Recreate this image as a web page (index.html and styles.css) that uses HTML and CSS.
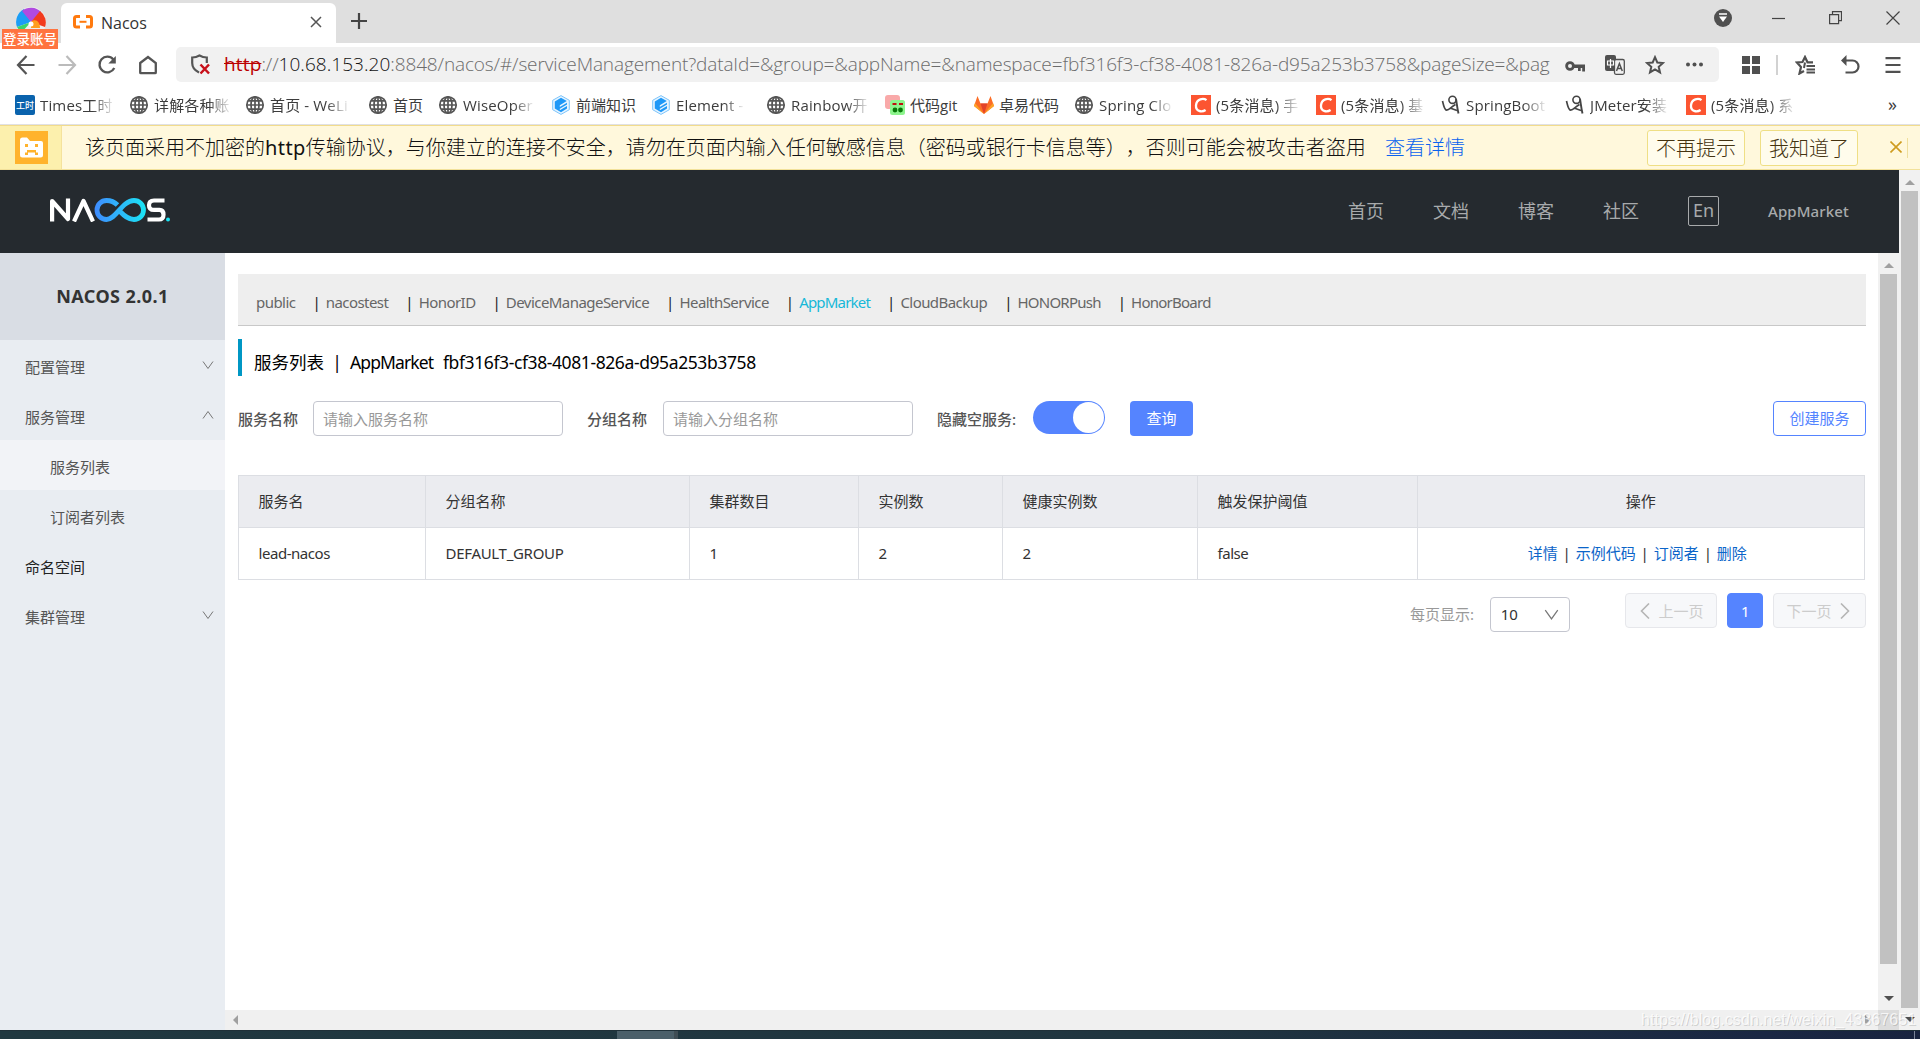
FILE: index.html
```html
<!DOCTYPE html>
<html lang="zh-CN">
<head>
<meta charset="utf-8">
<title>Nacos</title>
<link rel="stylesheet" href="styles.css">
</head>
<body>
<svg class="defs" width="0" height="0" aria-hidden="true">
  <symbol id="globe" viewBox="0 0 20 20"><g fill="none" stroke="#555" stroke-width="1.7"><circle cx="10" cy="10" r="8.2"/><ellipse cx="10" cy="10" rx="4" ry="8.2"/><path d="M10 2v16M2 10h16M3.2 5.8h13.6M3.2 14.2h13.6"/></g></symbol>
  <symbol id="element" viewBox="0 0 20 20"><path d="M10 .6l8.300 4.700v9.400L10 19.400l-8.300-4.700V5.300z" fill="#e6f4ff" stroke="#7cc4fb" stroke-width="1"/><path d="M10 2.800l5.800 3.300-7 4.200v1.600l7.200-4.200v1.900l-7.200 4.200v1.500l7.200-4.200v2.400L10 17.200l-6.200-3.600V6.400z" fill="#1e98f7"/></symbol>
  <symbol id="csdn" viewBox="0 0 20 20"><path d="M0 0h20v20H0z" fill="#fc5531"/><path d="M15.500 5.200C12.500 2.900 5.600 3.700 5 10.300c-.4 6 5.600 7.300 9.600 4.700" fill="none" stroke="#fff" stroke-width="2.300"/></symbol>
  <symbol id="figure" viewBox="0 0 20 20"><g fill="none" stroke="#444"><circle cx="11.500" cy="4.800" r="3.600" stroke-width="1.600"/><path d="M15 4c.8 4 1 8 2.500 14.500" stroke-width="1.900"/><path d="M1.500 6c1 4 1.500 7.500 3.500 9 2.500 1 5-3 9.500-5.500M9 13l7 2.500" stroke-width="1.700"/></g></symbol>
  <symbol id="down" viewBox="0 0 12 12"><path d="M1 2.500l5 7 5-7" fill="none" stroke="currentColor"/></symbol>
</svg>

<header class="browser">
  <div class="tabbar">
    <div class="account">
      <svg class="account-logo" width="30" height="30" viewBox="0 0 30 30"><circle cx="15" cy="15" r="15" fill="#eee"/><path d="M15 15L1 20A14.500 14.500 0 0 1 8 2z" fill="#1b9df5"/><path d="M15 15L6 4A14 14 0 0 1 25 5z" fill="#b04ae0"/><path d="M15 15L24 4A14 14 0 0 1 29 20z" fill="#f23b1e"/><path d="M15 15c4-4 9-1 9 6h-9z" fill="#ff9d1e"/><path d="M15 15L1 20l4 6z" fill="#3bd36c"/><circle cx="15" cy="17" r="2.500" fill="#fff"/></svg>
      <span class="account-tag">登录账号</span>
    </div>
    <div class="tab">
      <svg width="20" height="14" viewBox="0 0 20 14"><path d="M7 1.500H3.500Q1.500 1.500 1.500 3.500v6.500q0 2 2 2H7M13 1.500h3.500q2 0 2 2v6.500q0 2-2 2H13" fill="none" stroke="#ff7a0f" stroke-width="3"/><path d="M6.500 6.800h7" stroke="#ff7a0f" stroke-width="2"/></svg>
      <span class="tab-title">Nacos</span>
      <svg width="12" height="12" viewBox="0 0 12 12"><path d="M1 1l10 10M11 1L1 11" stroke="#555" stroke-width="1.500"/></svg>
    </div>
    <svg class="newtab" width="16" height="16" viewBox="0 0 16 16"><path d="M8 0v16M0 8h16" stroke="#444" stroke-width="2.200"/></svg>
    <div class="window-controls">
      <svg width="18" height="18" viewBox="0 0 18 18"><circle cx="9" cy="9" r="9" fill="#505050"/><path d="M5 5h8" stroke="#fff" stroke-width="1.500"/><path d="M5 7.500h8L9 13z" fill="#fff"/></svg>
      <svg width="13" height="14" viewBox="0 0 13 14"><path d="M0 7.500h13" stroke="#444" stroke-width="1.200"/></svg>
      <svg width="13" height="14" viewBox="0 0 13 14"><path d="M.6 3.600h9v9h-9zM3.500 3.500V.7h9v9H9.700" fill="none" stroke="#444" stroke-width="1.200"/></svg>
      <svg width="14" height="14" viewBox="0 0 14 14"><path d="M.5.500l13 13M13.500.500l-13 13" stroke="#444" stroke-width="1.200"/></svg>
    </div>
  </div>

  <div class="toolbar">
    <div class="nav-icons">
      <svg width="20" height="20" viewBox="0 0 20 20"><path d="M10.500 1L2 10l8.500 9M2 10h16.500" fill="none" stroke="#555" stroke-width="2.200"/></svg>
      <svg width="20" height="20" viewBox="0 0 20 20"><path d="M9.500 1L18 10l-8.500 9M18 10H1.500" fill="none" stroke="#bbb" stroke-width="2.200"/></svg>
      <svg width="20" height="20" viewBox="0 0 20 20"><path d="M16.300 4.500A7.800 7.800 0 1 0 17.300 13" fill="none" stroke="#555" stroke-width="2.300"/><path d="M18.800 1v7.500h-7.500z" fill="#555"/></svg>
      <svg width="20" height="20" viewBox="0 0 20 20"><path d="M2.200 8L10 2l7.800 6v9.500q0 .7-.7.700H2.900q-.7 0-.7-.7z" fill="none" stroke="#555" stroke-width="2.300"/></svg>
    </div>
    <div class="address">
      <svg width="20" height="21" viewBox="0 0 20 21"><path d="M9 18.500C4 16 2.200 13 2.200 9V3.500C5 3.500 7 3 9.500 1.500 12 3 14 3.500 16.800 3.500V9" fill="none" stroke="#555" stroke-width="2.200"/><path d="M10.500 10.500l8.500 9M19 10.500l-8.500 9" stroke="#c8101a" stroke-width="2.500"/></svg>
      <span class="url"><span class="scheme">http</span>://<span class="host">10.68.153.20</span>:8848/nacos/#/serviceManagement?dataId=&amp;group=&amp;appName=&amp;namespace=fbf316f3-cf38-4081-826a-d95a253b3758&amp;pageSize=&amp;pag</span>
      <div class="address-icons">
        <svg width="20" height="20" viewBox="0 0 20 20"><circle cx="5" cy="11" r="3.400" fill="none" stroke="#505050" stroke-width="2.800"/><path d="M8 9.500h12V16.500h-2.800v-3.500h-1.500V16H13v-3H8z" fill="#505050"/></svg>
        <svg width="20" height="20" viewBox="0 0 20 20"><rect x="0" y="0" width="11" height="16" rx="2" fill="#505050"/><rect x="9.500" y="4.500" width="9.800" height="14.800" rx="1.500" fill="#f1f1f1" stroke="#505050" stroke-width="1.300"/><path d="M2.500 6h6v4h-6zM5.500 4v9" fill="none" stroke="#fff" stroke-width="1.200"/><path d="M11.500 16l2.900-7.500 2.900 7.500M12.500 13.500h4" fill="none" stroke="#505050" stroke-width="1.500"/></svg>
        <svg width="20" height="20" viewBox="0 0 20 20"><path d="M10 2.200l2.300 5.300 5.700.5-4.300 3.800 1.300 5.600-5-3-5 3 1.300-5.600L2 8l5.700-.5z" fill="none" stroke="#505050" stroke-width="2"/></svg>
        <svg width="18" height="20" viewBox="0 0 18 20"><g fill="#505050"><circle cx="3" cy="9.500" r="2"/><circle cx="9.500" cy="9.500" r="2"/><circle cx="16" cy="9.500" r="2"/></g></svg>
      </div>
    </div>
    <div class="tools">
      <svg width="18" height="18" viewBox="0 0 18 18"><path d="M0 0h8v8H0zM10 0h8v8h-8zM0 10h8v8H0zM10 10h8v8h-8z" fill="#505050"/></svg>
      <span class="tool-sep"></span>
      <svg width="20" height="20" viewBox="0 0 20 20"><path d="M9 16l-4.500 2.500L6 12 2 7.500l5.500-.5L10 2l2.500 5.300H18" fill="none" stroke="#505050" stroke-width="2.200"/><path d="M10 7.500L9 13" stroke="#505050" stroke-width="2"/><path d="M11.500 11H20M11.500 14.500H20M11.500 17.500H20" stroke="#505050" stroke-width="1.800"/></svg>
      <svg width="20" height="20" viewBox="0 0 20 20"><path d="M3 5.500h9.500a5.800 5.800 0 0 1 0 12H5.500" fill="none" stroke="#505050" stroke-width="2.200"/><path d="M6.500 0v11L1 5.500z" fill="#505050"/></svg>
      <svg width="16" height="18" viewBox="0 0 16 18"><path d="M.5 2.200h15M.5 9h15M.5 15.800h15" stroke="#505050" stroke-width="2.200"/></svg>
    </div>
  </div>

  <nav class="bookmarks">
    <a><svg class="ico" viewBox="0 0 20 20"><rect width="20" height="20" rx="2" fill="#0a63ad"/><text x="10" y="14" text-anchor="middle" class="ico-text">工时</text></svg><span class="cut">Times工时</span></a>
    <a><svg class="ico"><use href="#globe"/></svg><span class="cut">详解各种账</span></a>
    <a><svg class="ico"><use href="#globe"/></svg><span class="cut">首页 - WeLi</span></a>
    <a><svg class="ico"><use href="#globe"/></svg><span>首页</span></a>
    <a><svg class="ico"><use href="#globe"/></svg><span class="cut">WiseOper</span></a>
    <a><svg class="ico"><use href="#element"/></svg><span>前端知识</span></a>
    <a><svg class="ico"><use href="#element"/></svg><span class="cut">Element -</span></a>
    <a><svg class="ico"><use href="#globe"/></svg><span class="cut">Rainbow开</span></a>
    <a><svg class="ico" viewBox="0 0 20 20"><rect width="15" height="14" rx="3" fill="#f9a9a9"/><rect x="5" y="5" width="15" height="15" rx="2.500" fill="#8df58d"/><path d="M7.500 9h4M14 9h4" stroke="#c01010" stroke-width="2"/><circle cx="10" cy="15" r="2.400" fill="#067806"/><circle cx="15.500" cy="15" r="2.400" fill="#067806"/></svg><span>代码git</span></a>
    <a><svg class="ico" viewBox="0 0 20 20"><path d="M0 11L3.500 1l3 7.500h7l3-7.500L20 11l-10 8z" fill="#fc6d26"/><path d="M6.500 8.500h7L10 19z" fill="#e24329"/><path d="M0 11l1-3 9 11zM20 11l-1-3-9 11z" fill="#fca326"/></svg><span>卓易代码</span></a>
    <a><svg class="ico"><use href="#globe"/></svg><span class="cut">Spring Clo</span></a>
    <a><svg class="ico"><use href="#csdn"/></svg><span class="cut">(5条消息) 手</span></a>
    <a><svg class="ico"><use href="#csdn"/></svg><span class="cut">(5条消息) 基</span></a>
    <a><svg class="ico"><use href="#figure"/></svg><span class="cut">SpringBoot</span></a>
    <a><svg class="ico"><use href="#figure"/></svg><span class="cut">JMeter安装</span></a>
    <a><svg class="ico"><use href="#csdn"/></svg><span class="cut">(5条消息) 系</span></a>
    <span class="more">»</span>
  </nav>

  <div class="notice">
    <div class="notice-icon"><svg width="33" height="33" viewBox="0 0 33 33"><path d="M0 0h33v33H0z" fill="#ffb32c"/><path d="M5 9q0-2.500 2.500-2.500H12L15 10h11q2 0 2 2v12q0 2.500-2.500 2.500h-18Q5 26.500 5 24z" fill="#fff"/><path d="M10 13h3v3h-3zM20 13h3v3h-3zM12 19h9v2.500h2V24h-3v-2.500h-7V24h-3v-2.500h2z" fill="#ffb32c"/></svg></div>
    <p class="notice-text">该页面采用不加密的<span class="http">http</span>传输协议，与你建立的连接不安全，请勿在页面内输入任何敏感信息（密码或银行卡信息等<span class="paren">）</span>，否则可能会被攻击者盗用</p>
    <a class="notice-link">查看详情</a>
    <button class="notice-btn first">不再提示</button>
    <button class="notice-btn">我知道了</button>
    <svg class="notice-close" width="12" height="12" viewBox="0 0 12 12"><path d="M.5.500l11 11M11.500.500l-11 11" stroke="#cf9c1f" stroke-width="1.600"/></svg>
    <span class="notice-end"></span>
  </div>
</header>

<div class="viewport">
  <div class="page">
    <header class="topnav">
      <svg class="logo" width="120" height="24" viewBox="0 0 120 24">
        <defs><linearGradient id="inf" x1="45" x2="95" y1="0" y2="0" gradientUnits="userSpaceOnUse"><stop stop-color="#3f8cff"/><stop offset="1" stop-color="#1be4f5"/></linearGradient></defs>
        <g fill="none" stroke="#fff" stroke-width="4.200" stroke-linejoin="round"><path d="M2.100 23.500V3L18 21V.5"/><path d="M24 23.500L33.500 3 43 23.500"/><path d="M114.500 2.500h-10.500q-5 0-5 4.700t5 4.700h5.500q4 0 4 4.800t-4.500 4.800H97.500"/></g>
        <path d="M67.500 7C64 3.500 61 2.500 56.500 2.500a9.500 9.500 0 0 0 0 19C66 21.500 72 2.500 84 2.500a9.500 9.500 0 0 1 0 19c-6 0-10-4-14-8" fill="none" stroke="url(#inf)" stroke-width="4.800"/>
        <circle cx="118" cy="21.500" r="2" fill="#1be4f5"/>
      </svg>
      <nav class="links"><a>首页</a><a>文档</a><a>博客</a><a>社区</a><a class="lang">En</a><a class="user">AppMarket</a></nav>
    </header>
    <div class="body">
      <aside class="sidebar">
        <h1 class="brand">NACOS 2.0.1</h1>
        <a class="item">配置管理<svg class="arrow"><use href="#down"/></svg></a>
        <a class="item">服务管理<svg class="arrow up"><use href="#down"/></svg></a>
        <a class="item sub active">服务列表</a>
        <a class="item sub">订阅者列表</a>
        <a class="item strong">命名空间</a>
        <a class="item">集群管理<svg class="arrow"><use href="#down"/></svg></a>
      </aside>
      <main class="main">
        <div class="scroller">
          <div class="content">
            <div class="namespaces"><a>public</a><a>nacostest</a><a>HonorID</a><a>DeviceManageService</a><a>HealthService</a><a class="on">AppMarket</a><a>CloudBackup</a><a>HONORPush</a><a>HonorBoard</a></div>
            <h2 class="title"><span>服务列表</span><i>|</i><span class="t-ns">AppMarket</span><span class="t-id">fbf316f3-cf38-4081-826a-d95a253b3758</span></h2>
            <form class="filters">
              <label>服务名称</label><div class="input">请输入服务名称</div>
              <label>分组名称</label><div class="input">请输入分组名称</div>
              <label class="l3">隐藏空服务:</label><span class="switch"></span>
              <span class="btn primary">查询</span>
              <span class="btn outline">创建服务</span>
            </form>
            <table class="grid">
              <colgroup><col class="c1"><col class="c2"><col class="c3"><col class="c4"><col class="c5"><col class="c6"><col></colgroup>
              <tr><th>服务名</th><th>分组名称</th><th>集群数目</th><th>实例数</th><th>健康实例数</th><th>触发保护阈值</th><th class="ops">操作</th></tr>
              <tr><td>lead-nacos</td><td>DEFAULT_GROUP</td><td>1</td><td>2</td><td>2</td><td>false</td><td class="ops"><div><a>详情</a><i>|</i><a>示例代码</a><i>|</i><a>订阅者</a><i>|</i><a>删除</a></div></td></tr>
            </table>
            <div class="pager">
              <span class="size-label">每页显示:</span>
              <div class="select">10<svg width="15" height="15" class="caret"><use href="#down"/></svg></div>
              <span class="page-btn prev"><svg width="10" height="16" viewBox="0 0 10 16"><path d="M9 .5L1.500 8 9 15.500" fill="none" stroke="#b5b5b5" stroke-width="1.600"/></svg>上一页</span>
              <span class="page-btn current">1</span>
              <span class="page-btn next">下一页<svg width="10" height="16" viewBox="0 0 10 16"><path d="M1 .5L8.500 8 1 15.500" fill="none" stroke="#b5b5b5" stroke-width="1.600"/></svg></span>
            </div>
          </div>
          <div class="vbar inner"><i class="tri up"></i><b></b><i class="tri dn"></i></div>
        </div>
        <div class="hbar"><i class="tri lf"></i><i class="tri rt"></i><b></b></div>
      </main>
    </div>
  </div>
  <div class="vbar outer"><i class="tri up"></i><b></b><i class="tri dn"></i></div>
  <span class="watermark">https://blog.csdn.net/weixin_43367651</span>
</div>
<footer class="taskbar"><span class="task"></span><span class="clock">10:04</span><span class="edge"></span></footer>
</body>
</html>
```
FILE: styles.css
```css
* { box-sizing: border-box; }
body { margin: 0; width: 1920px; height: 1039px; overflow: hidden; display: flex; flex-direction: column; font: 15px/20px "Noto Sans", "Noto Sans CJK SC", sans-serif; color: #333; background: #fff; }
svg { display: block; flex: none; }
i { font-style: normal; }
.defs { position: absolute; }
h1, h2, p { margin: 0; font-weight: 400; }
a, span, th, td, label { white-space: nowrap; }

/* browser chrome */
.browser { flex: none; height: 170px; font-family: "Open Sans", "Noto Sans CJK SC", sans-serif; }
.tabbar { height: 43px; background: #dfdfdf; display: flex; }
.account { width: 61px; position: relative; z-index: 1; }
.account-logo { position: absolute; left: 16px; top: 7px; }
.account-tag { position: absolute; left: 2px; top: 29px; width: 56px; height: 20px; background: #ff7440; color: #fff; font-size: 13.500px; line-height: 20px; text-align: center; font-weight: 500; }
.tab { width: 275px; height: 40px; margin-top: 3px; background: #fff; border-radius: 6px 6px 0 0; display: flex; align-items: center; padding: 0 14px 0 12px; }
.tab svg { margin-bottom: 3px; }
.tab-title { flex: 1; margin: 0 0 1px 8px; font-size: 16px; }
.newtab { margin: 13px 0 0 15px; }
.window-controls { margin-left: auto; display: flex; align-items: center; height: 36px; padding-right: 20px; }
.window-controls svg + svg { margin-left: 44px; }
.window-controls svg:nth-child(2) { margin-left: 40px; }
.toolbar { height: 43px; display: flex; align-items: center; }
.nav-icons { display: flex; gap: 20.500px; padding-left: 16px; width: 176px; }
.address { width: 1543px; height: 35px; background: #f1f1f1; border-radius: 5px; display: flex; align-items: center; padding-left: 14px; }
.url { margin: -1px 0 0 14px; width: 1331px; font-size: 19px; font-weight: 300; color: #6c6c6c; letter-spacing: -.13px; overflow: hidden; line-height: 26px; }
.scheme { color: #b00; text-decoration: line-through; font-weight: 400; letter-spacing: .15px; }
.host { color: #111; letter-spacing: .05px; }
.address-icons { display: flex; gap: 20px; margin-left: 10px; }
.tools { flex: 1; display: flex; align-items: center; padding: 0 19px 0 23px; justify-content: space-between; }
.tool-sep { width: 2px; height: 20px; background: #d2d2d2; margin: 0 -9px; }
.bookmarks { height: 39px; padding: 0 0 0 15px; display: grid; grid-template-columns: 114px 116px 123px 70px 113px 100px 115px 119px 89px 100px 117px 125px 125px 124px 121px 202px 20px; align-items: center; border-bottom: 1px solid #e0e1e4; font-size: 15px; color: #3c3c3c; }
.bookmarks a { display: flex; align-items: center; gap: 5px; }
.bookmarks a span { margin-top: -1px; }
.bookmarks .ico { width: 20px; height: 20px; }
.ico-text { font: 500 9px "Noto Sans CJK SC", sans-serif; fill: #fff; }
.cut { letter-spacing: .15px; -webkit-mask-image: linear-gradient(90deg, #000 72%, rgba(0, 0, 0, .1)); mask-image: linear-gradient(90deg, #000 72%, rgba(0, 0, 0, .1)); }
.more { font-size: 18px; margin-top: -3px; }
.notice { height: 45px; background: #fff8dc; border-top: 1px solid #f2dc8c; border-bottom: 1px solid #f2e19a; display: flex; align-items: center; font-size: 20px; }
.notice-icon { width: 62px; height: 43px; background: #fcf0ad; border-right: 1px solid #f5e29c; display: flex; align-items: center; padding-left: 15px; }
.notice-text { margin-left: 23px; width: 1300px; line-height: 28px; white-space: nowrap; font-weight: 300; color: #111; }
.http { font-family: "Noto Sans", sans-serif; font-weight: 400; letter-spacing: .4px; }
.paren { display: inline-block; width: 20px; }
.notice-link { color: #0a62ee; width: 262px; font-weight: 300; }
.notice-btn { width: 98px; height: 36px; padding: 0; margin-right: 15px; font: 300 20px/28px "Noto Sans CJK SC", sans-serif; color: #443310; background: #fffcec; border: 1px solid #efdf85; border-radius: 3px; white-space: nowrap; }
.notice-close { margin: -2px 0 0 17px; }
.notice-end { width: 1px; height: 20px; background: #efdf9d; margin-left: 5px; }

/* page */
.viewport { position: relative; height: 860px; display: flex; }
.page { width: 1899px; }
.topnav { height: 83px; background: #252a2f; display: flex; justify-content: space-between; padding: 0 50px; }
.logo { margin-top: 27.500px; }
.links { display: flex; align-items: center; color: #a8aaac; font-size: 18px; padding-bottom: 2px; }
.links a { margin-right: 49px; }
.links .lang { border: 1px solid #a8aaac; border-radius: 2px; width: 31px; height: 30px; line-height: 27px; text-align: center; }
.links .user { margin-right: 0; font-size: 15px; font-weight: 500; width: 81px; letter-spacing: .1px; }
.body { display: flex; height: 777px; }
.sidebar { width: 225px; background: #e9edf2; color: #555; }
.brand { height: 87px; background: #d9dde4; text-align: center; font-size: 18px; line-height: 87px; font-weight: 700; color: #333; letter-spacing: .45px; }
.item { display: flex; align-items: center; height: 50px; padding: 3px 11px 0 25px; justify-content: space-between; }
.sub { padding-left: 50px; }
.active { background: #f2f3f7; }
.strong { color: #222; }
.arrow { width: 12px; height: 12px; color: #777; margin-top: -4px; }
.arrow.up { transform: rotate(180deg); }
.main { width: 1674px; }
.scroller { height: 757px; display: flex; }
.content { width: 1653px; padding: 21px 12px 0 13px; }
.namespaces { height: 52px; background: #eee; border-bottom: 1px solid #c8c8c8; display: flex; align-items: center; padding: 4px 0 0 18px; color: #666; letter-spacing: -.55px; }
.namespaces a + a { margin-left: 17px; }
.namespaces a + a::before { content: "|"; color: #222; display: inline-block; width: 13.300px; }
.namespaces a:nth-child(n+8) { letter-spacing: -.75px; }
.namespaces .on { color: #16b8d8; letter-spacing: -.8px; }
.title { height: 37px; margin-top: 13px; border-left: 4px solid #0097c4; padding: 9px 0 0 12px; font-size: 17.500px; line-height: 28px; color: #000; display: flex; }
.title i { width: 26px; text-align: center; }
.t-ns { width: 93px; letter-spacing: -.9px; }
.t-id { letter-spacing: -.4px; }
.filters { margin-top: 25px; height: 35px; display: flex; align-items: center; }
.filters label { font-weight: 500; color: #555; width: 75px; }
.input { width: 250px; height: 35px; border: 1px solid #c4c6cf; border-radius: 4px; padding: 7px 9px; color: #999; }
.input + label { margin-left: 24px; width: 76px; }
.input + .l3 { margin-left: 24px; width: 96px; }
.switch { width: 72px; height: 33px; border-radius: 17px; background: #5584ff; padding: 1px; display: flex; justify-content: flex-end; margin-top: -2px; }
.switch::after { content: ""; width: 31px; height: 31px; border-radius: 50%; background: #fff; }
.btn { height: 35px; border-radius: 4px; line-height: 35px; text-align: center; }
.primary { width: 63px; background: #5584ff; color: #fff; margin-left: 25px; }
.outline { width: 93px; border: 1px solid #5584ff; color: #5584ff; margin-left: auto; line-height: 33px; }
.grid { width: 1627px; margin-top: 39px; border-collapse: collapse; table-layout: fixed; }
.c1 { width: 187px; } .c2 { width: 264px; } .c3 { width: 169px; } .c4 { width: 144px; } .c5 { width: 195px; } .c6 { width: 220px; }
.grid th, .grid td { height: 52px; border: 1px solid #dcdee3; padding: 0 20px 2px 19.500px; font-weight: 400; text-align: left; letter-spacing: -.45px; }
.grid th { background: #ebecf0; letter-spacing: 0; }
.grid td:nth-child(2) { letter-spacing: -.3px; }
.grid .ops { text-align: center; }
.ops div { display: flex; justify-content: center; padding-right: 7px; letter-spacing: 0; }
.ops a { color: #0b65c9; }
.ops i { width: 18px; }
.pager { display: flex; margin-top: 13px; }
.size-label { width: 80px; margin: 11px 0 0 1172px; color: #999; }
.select { width: 80px; height: 35px; margin: 4px 55px 0 0; border: 1px solid #c4c6cf; border-radius: 4px; padding: 6px 10px; display: flex; justify-content: space-between; }
.caret { color: #777; margin-top: 3px; }
.page-btn { width: 93px; height: 35px; border: 1px solid #e6e7eb; border-radius: 4px; background: #f7f8fa; color: #ccc; display: flex; align-items: center; justify-content: center; gap: 8px; }
.prev { padding-left: 2px; }
.next { padding-right: 3px; }
.page-btn.current { width: 36px; margin: 0 10px; background: #5584ff; border-color: #5584ff; color: #fff; }

/* scrollbars */
.vbar { background: #f1f1f1; width: 21px; display: flex; flex-direction: column; align-items: center; }
.vbar b { width: 17px; background: #c1c1c1; margin-top: 6px; }
.inner b { height: 690px; }
.outer b { height: 817px; margin-right: 1px; }
.tri { border: 5px solid transparent; }
.tri.up { border-bottom-color: #a0a0a0; border-top: 0; margin-top: 10px; }
.inner .dn { margin-top: 32px; }
.tri.dn { border-top-color: #505050; border-bottom: 0; }
.outer .dn { margin-top: 9px; }
.hbar { height: 20px; background: #f0f0f0; display: flex; align-items: center; }
.tri.lf { border-right-color: #a0a0a0; border-left: 0; margin-left: 8px; }
.tri.rt { border-left-color: #a0a0a0; border-right: 0; margin-left: auto; }
.hbar b { width: 21px; height: 20px; background: #dcdcdc; margin-left: 8px; }
.watermark { position: absolute; left: 1641px; top: 840px; font: 16px/20px "Liberation Sans", sans-serif; letter-spacing: .08px; color: rgba(255, 255, 255, .75); text-shadow: 1px 1px 0 rgba(0, 0, 0, .15); }

.taskbar { flex: none; height: 9px; overflow: hidden; display: flex; background: linear-gradient(90deg, #203840, #20353f 60%, #1a2743 92%, #19243f); border-top: 1px solid #1f3038; }
.task { width: 61px; height: 9px; margin-left: 617px; background: #4b5f69; border-right: 4px solid #3f4d54; }
.clock { margin-left: 1051px; width: 185px; font: 15px/20px "Noto Sans", sans-serif; color: #fff; padding-top: 2px; }
.edge { width: 1px; background: #7b8598; }
```
